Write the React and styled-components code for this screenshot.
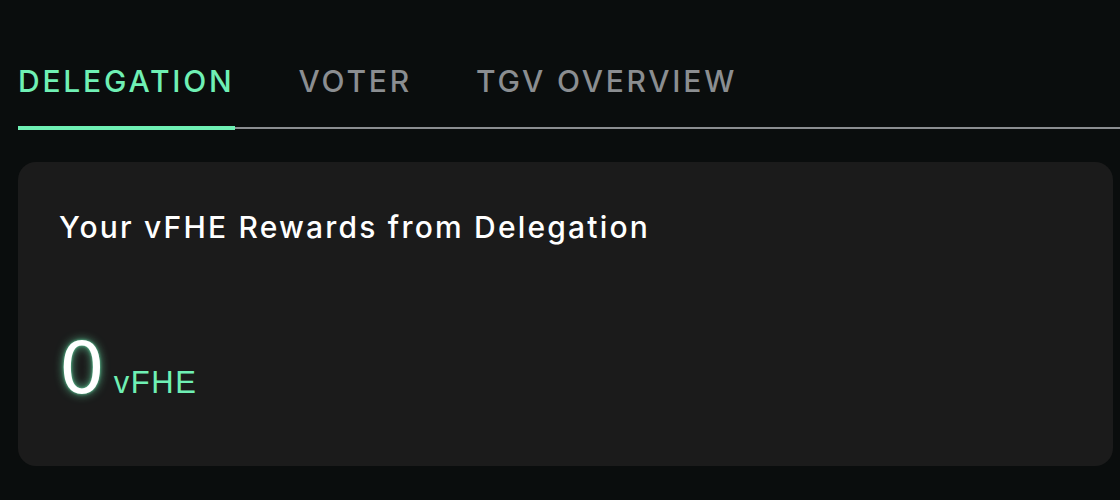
import React from "react";
import styled, { createGlobalStyle } from "styled-components";

const GlobalStyle = createGlobalStyle`
    html, body {
        margin: 0;
        padding: 0;
        background: #0a0d0d;
    }
    body {
        font-family: Inter, "Open Sans", sans-serif;
        color: #ffffff;
    }
`;

const tabs = ["DELEGATION", "VOTER", "TGV OVERVIEW"];

const App = () => {
    const active = 0;

    return (
        <Page>
            <GlobalStyle />
            <TabBar>
                {tabs.map((t, i) => (
                    <Tab key={t} active={i === active}>{t}</Tab>
                ))}
            </TabBar>
            <Card>
                <Title>Your vFHE Rewards from Delegation</Title>
                <Amount>
                    <Value>0</Value>
                    <Unit>vFHE</Unit>
                </Amount>
            </Card>
        </Page>
    );
}

const Page = styled.div`
    width: 1120px;
    height: 500px;
    padding: 54px 0 0 18px;
    box-sizing: border-box;
    overflow: hidden;
`;

const TabBar = styled.div`
    display: flex;
    gap: 64px;
    border-bottom: 2px solid #8b8e91;
    margin-bottom: 33px;
`;

const Tab = styled.div`
    position: relative;
    font-size: 30px;
    font-weight: 500;
    letter-spacing: 2.8px;
    line-height: 54px;
    padding-bottom: 19px;
    color: ${p => p.active ? "#6ff0b4" : "#8b8e91"};

    &::after {
        content: "";
        display: ${p => p.active ? "block" : "none"};
        position: absolute;
        left: 0;
        right: 0;
        bottom: -3px;
        height: 4px;
        background: #6ff0b4;
    }
`;

const Card = styled.div`
    width: 1095px;
    height: 304px;
    background: #1b1b1b;
    border-radius: 18px;
    padding: 47px 41px 41px;
    box-sizing: border-box;
    display: flex;
    flex-direction: column;
    justify-content: space-between;
`;

const Title = styled.h3`
    margin: 0;
    font-size: 30px;
    font-weight: 500;
    letter-spacing: 2.2px;
    color: #ffffff;
`;

const Amount = styled.div`
    display: flex;
    align-items: baseline;
    gap: 9px;
    padding-bottom: 21px;
`;

const Value = styled.span`
    font-family: "DejaVu Sans", "Liberation Sans", sans-serif;
    font-size: 72px;
    line-height: 1;
    color: #ffffff;
    text-shadow: 0 0 10px rgba(111, 240, 180, 0.75), 0 0 3px rgba(111, 240, 180, 0.8);
`;

const Unit = styled.span`
    font-family: "Liberation Sans", Arial, sans-serif;
    font-size: 31px;
    letter-spacing: 1.5px;
    color: #6ff0b4;
`;

export default App;
